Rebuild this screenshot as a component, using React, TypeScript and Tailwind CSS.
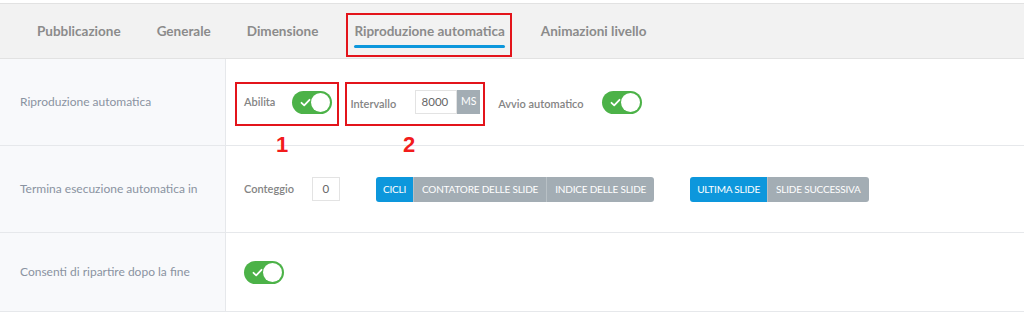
import React from "react";

const Toggle = () => (
  <div className="w-[40px] h-[23px] rounded-full bg-[#4cb248] flex items-center justify-between pl-[8px] pr-[2px]">
    <svg width="11" height="9" viewBox="0 0 11 9" fill="none">
      <path d="M1.5 4.8 L4.2 7.3 L9.5 1.8" stroke="white" strokeWidth="1.8" strokeLinecap="round" strokeLinejoin="round" />
    </svg>
    <div className="w-[19px] h-[19px] rounded-full bg-white" />
  </div>
);

const Field = ({ children }: { children: React.ReactNode }) => (
  <span className="text-[11px] font-semibold text-[#848484]">{children}</span>
);

const Segmented = ({ items }: { items: string[] }) => (
  <div className="flex h-[25px] rounded-[3px] overflow-hidden">
    {items.map((it, i) => (
      <div
        key={it}
        className={
          i === 0
            ? "flex items-center px-[7px] bg-[#0d97dc] text-white text-[10px] tracking-[-0.2px]"
            : "flex items-center px-[8px] bg-[#a3adb4] text-white text-[10px] tracking-[-0.2px] border-l border-[#b8c0c5]"
        }
      >
        {it}
      </div>
    ))}
  </div>
);

const Row = ({ label, children, last }: { label: string; children: React.ReactNode; last?: boolean }) => (
  <div className={"grid grid-cols-[226px_1fr] border-b border-[#e6e8eb] " + (last ? "h-[79px]" : "h-[87px]")}>
    <div className="bg-[#f8f9fb] border-r border-[#e6e8eb] flex items-center pl-[20px] text-[12px] text-[#8a93a1]">
      {label}
    </div>
    <div className="flex items-center pl-[18px]">{children}</div>
  </div>
);

export default function App() {
  const tabs = ["Pubblicazione", "Generale", "Dimensione", "Riproduzione automatica", "Animazioni livello"];
  return (
    <div className="relative w-[1024px] h-[315px] bg-white pt-[3px] font-['Lato',sans-serif] overflow-hidden">
      <div className="h-[56px] bg-[#f2f2f2] border-y border-[#e2e2e2] flex items-center pl-[37px] gap-[36px]">
        {tabs.map((t) => (
          <div key={t} className="relative text-[13.5px] font-bold text-[#8b8b8b]">
            {t}
            {t === "Riproduzione automatica" && (
              <div className="absolute left-0 right-0 top-[24px] h-[3px] rounded-full bg-[#0d97dc]" />
            )}
          </div>
        ))}
      </div>

      <Row label="Riproduzione automatica">
        <Field>Abilita</Field>
        <div className="ml-[17px]">
          <Toggle />
        </div>
        <div className="ml-[18px]">
          <Field>Intervallo</Field>
        </div>
        <div className="ml-[19px] flex h-[24px]">
          <div className="w-[42px] border border-[#e3e3e3] flex items-center justify-end pr-[8px] text-[11.5px] text-[#666]">8000</div>
          <div className="w-[23px] bg-[#a3adb4] text-white text-[10.5px] flex items-center justify-center">MS</div>
        </div>
        <div className="ml-[18px]">
          <Field>Avvio automatico</Field>
        </div>
        <div className="ml-[18px]">
          <Toggle />
        </div>
      </Row>

      <Row label="Termina esecuzione automatica in">
        <Field>Conteggio</Field>
        <div className="ml-[18px] w-[28px] h-[24px] border border-[#e3e3e3] flex items-center justify-center text-[11.5px] text-[#666]">0</div>
        <div className="ml-[36px]">
          <Segmented items={["CICLI", "CONTATORE DELLE SLIDE", "INDICE DELLE SLIDE"]} />
        </div>
        <div className="ml-[36px]">
          <Segmented items={["ULTIMA SLIDE", "SLIDE SUCCESSIVA"]} />
        </div>
      </Row>

      <Row label="Consenti di ripartire dopo la fine" last>
        <Toggle />
      </Row>

      {/* annotations */}
      <div className="absolute left-[346px] top-[13px] w-[166px] h-[44px] border-2 border-[#e3141b]" />
      <div className="absolute left-[235px] top-[82px] w-[104px] h-[44px] border-2 border-[#e3141b]" />
      <div className="absolute left-[345px] top-[82px] w-[140px] h-[44px] border-2 border-[#e3141b]" />
      <div className="absolute left-[276px] top-[128px] text-[22px] font-bold text-[#f21c1c] font-['Liberation_Sans',sans-serif]">1</div>
      <div className="absolute left-[403px] top-[128px] text-[22px] font-bold text-[#f21c1c] font-['Liberation_Sans',sans-serif]">2</div>
    </div>
  );
}
